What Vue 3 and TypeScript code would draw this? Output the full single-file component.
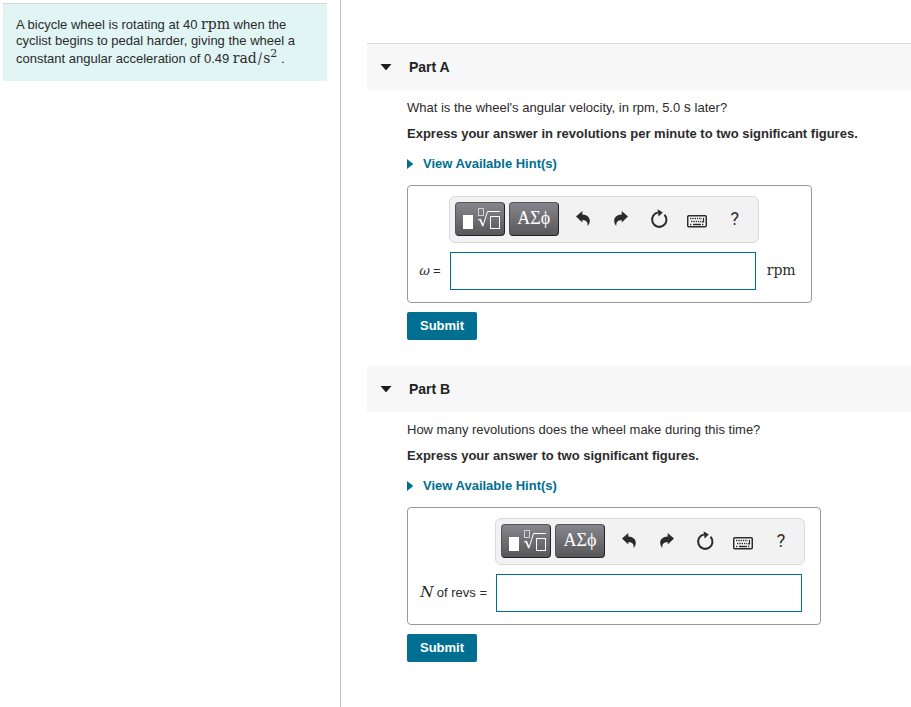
<script setup lang="ts">
import { ref } from 'vue'

interface Part {
  id: string
  title: string
  question: string
  symbolUnit?: string
  questionEnd?: string
  instruction: string
  variable: string
  labelText: string
  unit: string
}

const parts: Part[] = [
  {
    id: 'a',
    title: 'Part A',
    question: "What is the wheel's angular velocity, in rpm, 5.0 ",
    symbolUnit: 's',
    questionEnd: ' later?',
    instruction: 'Express your answer in revolutions per minute to two significant figures.',
    variable: 'ω',
    labelText: ' =',
    unit: 'rpm',
  },
  {
    id: 'b',
    title: 'Part B',
    question: 'How many revolutions does the wheel make during this time?',
    instruction: 'Express your answer to two significant figures.',
    variable: 'N',
    labelText: ' of revs =',
    unit: '',
  },
]

const answers = ref<Record<string, string>>({ a: '', b: '' })
</script>

<template>
  <div class="page">
    <aside class="intro">
      <p class="problem">
        A bicycle wheel is rotating at 40 <span class="math">rpm</span> when the cyclist begins to pedal harder, giving
        the wheel a constant angular acceleration of 0.49 <span class="math tall">rad/s<sup>2</sup></span> .
      </p>
    </aside>
    <main class="work">
      <section v-for="part in parts" :key="part.id" class="part">
        <h2 class="part-header">
          <button type="button" class="toggle">
            <svg class="caret" width="12" height="6" viewBox="0 0 12 6" aria-hidden="true"><path d="M0.5 0h11L6.8 5.4a1 1 0 0 1-1.6 0z" /></svg>
            <span>{{ part.title }}</span>
          </button>
        </h2>
        <div class="part-body">
          <p class="question">{{ part.question }}<span v-if="part.symbolUnit" class="math">{{ part.symbolUnit }}</span>{{ part.questionEnd }}</p>
          <p class="instruction">{{ part.instruction }}</p>
          <a class="hints" href="#">
            <svg width="6" height="10" viewBox="0 0 6 10" aria-hidden="true"><path d="M0 0v10L5.7 5.6a0.8 0.8 0 0 0 0-1.2z" /></svg>
            <span>View Available Hint(s)</span>
          </a>
          <form class="answer" @submit.prevent>
            <div class="answer-box">
              <div class="toolbar" role="toolbar">
                <button type="button" class="palette" aria-label="Templates">
                  <svg width="48" height="32" viewBox="0 0 48 32" aria-hidden="true">
                    <rect x="7" y="12" width="10" height="14" fill="#fff" />
                    <g fill="none" stroke="#fff">
                      <rect x="22.5" y="5.5" width="5" height="7" stroke="#d2d2d4" />
                      <path d="M22 17.2l2-1" />
                      <path d="M24 16l2.8 6.5" stroke-width="1.8" />
                      <path d="M26.8 23.5L31.5 8.5H44" />
                      <rect x="34.5" y="13.5" width="9" height="12" />
                    </g>
                  </svg>
                </button>
                <button type="button" class="palette symbols">ΑΣϕ</button>
                <button type="button" class="tool first" aria-label="Undo">
                  <svg width="22" height="22" viewBox="0 0 22 22"><path d="M4 8.6L10.3 3v3.4c4.9.1 7.5 2.9 7.5 6.3 0 2.2-.9 4-2.2 5.3.5-3.8-1.1-6-5.3-6.1v2.7z" /></svg>
                </button>
                <button type="button" class="tool" aria-label="Redo">
                  <svg width="22" height="22" viewBox="0 0 22 22"><path d="M18 8.6L11.7 3v3.4C6.8 6.5 4.2 9.3 4.2 12.7c0 2.2.9 4 2.2 5.3-.5-3.8 1.1-6 5.3-6.1v2.7z" /></svg>
                </button>
                <button type="button" class="tool" aria-label="Reset">
                  <svg width="22" height="22" viewBox="0 0 22 22"><path d="M16.5 6.7A7.2 7.2 0 1 1 9.8 4.6" fill="none" stroke="#2b2b2b" stroke-width="2" /><path d="M9.6 1.2l5.2 3.3-4.2 4z" /></svg>
                </button>
                <button type="button" class="tool" aria-label="Keyboard">
                  <svg width="22" height="22" viewBox="0 0 22 22">
                    <rect x="1.75" y="7.75" width="18.5" height="11" rx="1" fill="#fff" stroke="#2b2b2b" stroke-width="1.5" />
                    <path d="M4 10.5h12M5 13.5h10M4 16.5h2M16 16.5h2" fill="none" stroke="#2b2b2b" stroke-width="1.4" stroke-dasharray="1.4 0.9" />
                    <path d="M7 16.5h8M17.5 9.8v4h-2" fill="none" stroke="#2b2b2b" stroke-width="1.3" />
                  </svg>
                </button>
                <button type="button" class="tool help" aria-label="Help">?</button>
              </div>
              <label class="answer-label" :for="`answer-${part.id}`"><span class="variable" :class="{ greek: part.variable === 'ω' }">{{ part.variable }}</span>{{ part.labelText }}</label>
              <input :id="`answer-${part.id}`" v-model="answers[part.id]" class="answer-input" type="text" />
              <span v-if="part.unit" class="unit">{{ part.unit }}</span>
            </div>
            <button type="submit" class="submit">Submit</button>
          </form>
        </div>
      </section>
    </main>
  </div>
</template>

<style>
body {
  background: #fff;
}
</style>

<style scoped>
.page {
  display: flex;
  min-height: 100vh;
  color: #2b2b2b;
  font-family: "Liberation Sans", Arial, sans-serif;
  font-size: 13px;
  line-height: 16px;
}
.page * {
  box-sizing: border-box;
}
.intro {
  flex: 0 0 341px;
  padding: 3px 13px 0 3px;
  border-right: 1px solid #b0c4d8;
}
.problem {
  margin: 0;
  padding: 13px 13px 12px;
  border-top: 1px solid #d3d9d9;
  background: #e1f5f4;
}
.math,
.unit {
  font-family: "DejaVu Math TeX Gyre", "Liberation Serif", serif;
  font-size: 14px;
  line-height: 0;
}
.math.tall {
  line-height: 20px;
}
.math sup {
  font-size: 11px;
  line-height: 0;
}
.work {
  flex: 1;
  min-width: 0;
  padding: 43px 0 0 26px;
}
.part {
  margin-bottom: 26px;
}
.part-header {
  margin: 0;
  background: #f7f7f7;
}
.part:first-child .part-header {
  border-top: 1px solid #d8d8d8;
}
.toggle {
  display: flex;
  align-items: center;
  gap: 17px;
  width: 100%;
  height: 46px;
  padding: 0 13px;
  border: 0;
  background: none;
  color: #222;
  font: bold 14px/18px "Liberation Sans", Arial, sans-serif;
  text-align: left;
}
.caret {
  fill: #1e1e1e;
}
.part-body {
  padding: 10px 0 0 40px;
}
.question,
.instruction {
  margin: 0 0 10px;
}
.instruction {
  margin-bottom: 14px;
  font-weight: bold;
}
.hints {
  display: flex;
  align-items: center;
  gap: 10px;
  color: #006f91;
  font-weight: bold;
  text-decoration: none;
}
.hints svg {
  fill: #006f91;
}
.answer {
  display: flex;
  flex-direction: column;
  align-items: flex-start;
  gap: 9px;
  margin-top: 13px;
}
.answer-box {
  display: grid;
  grid-template-columns: auto auto auto;
  align-items: center;
  row-gap: 9px;
  padding: 10px 15px 12px 10px;
  border: 1px solid #999;
  border-radius: 4px;
}
.toolbar {
  display: flex;
  grid-column: 2 / 4;
  align-items: center;
  justify-self: start;
  gap: 4px;
  height: 47px;
  padding: 0 6px 2px 5px;
  border: 1px solid #dadada;
  border-radius: 6px;
  background: #f2f2f2;
}
.palette {
  width: 50px;
  height: 34px;
  padding: 0;
  border: 1px solid #222;
  border-top-color: #555;
  border-left-color: #555;
  border-radius: 4px;
  background: linear-gradient(#85858d, #58585a);
  color: #fff;
}
.palette svg {
  display: block;
}
.symbols {
  padding-bottom: 2px;
  font: 18px/30px "Liberation Serif", "Times New Roman", serif;
}
.tool {
  display: flex;
  align-items: center;
  justify-content: center;
  width: 34px;
  height: 34px;
  padding: 0;
  border: 0;
  background: none;
  color: #2b2b2b;
  fill: #2b2b2b;
}
.tool.first {
  margin-left: 3px;
}
.help {
  font: 18px/20px Roboto, sans-serif;
}
.answer-label {
  padding-right: 8px;
}
.variable {
  padding: 0 1px;
  font-family: "DejaVu Math TeX Gyre", "Liberation Serif", serif;
  font-size: 15px;
  font-style: italic;
  line-height: 0;
}
.variable.greek {
  padding: 0;
  font-size: 13px;
}
.answer-input {
  width: 306px;
  height: 38px;
  margin-left: 1px;
  padding: 0 8px;
  border: 1px solid #006f91;
  border-radius: 0;
  outline: none;
  background: #fff;
  font: inherit;
}
.unit {
  padding-left: 11px;
}
.submit {
  height: 28px;
  padding: 0 13px;
  border: 0;
  border-radius: 2px;
  background: #006f91;
  color: #fff;
  font: bold 13px/18px "Liberation Sans", Arial, sans-serif;
}
</style>
